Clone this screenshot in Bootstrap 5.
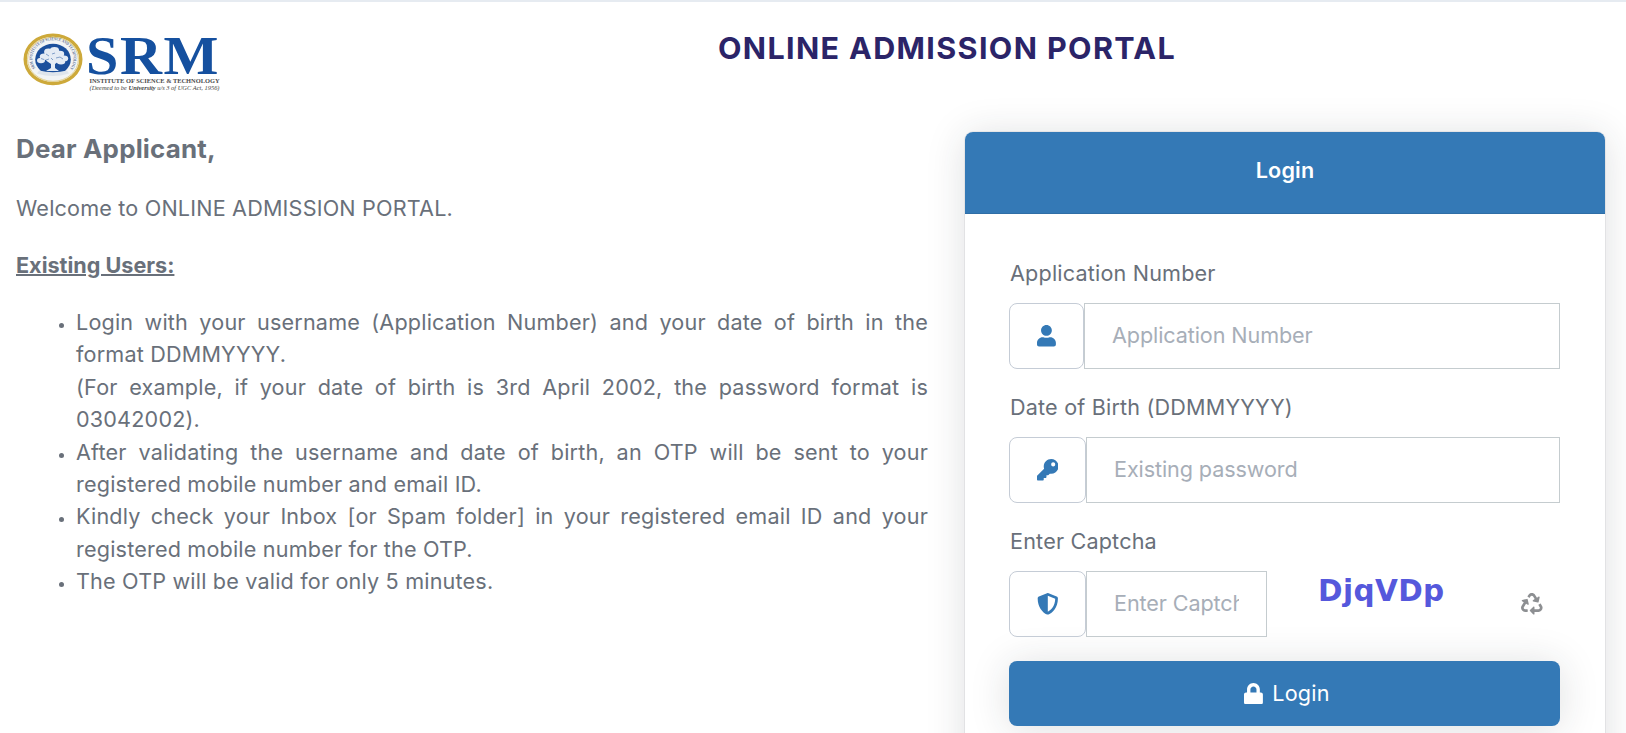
<!DOCTYPE html>
<html lang="en">
<head>
  <meta charset="UTF-8">
  <meta name="viewport" content="width=device-width, initial-scale=1.0">
  <title>Online Admission Portal</title>
  <link href="https://cdn.jsdelivr.net/npm/bootstrap@5.3.3/dist/css/bootstrap.min.css" rel="stylesheet">
  <style>
    body {
      font-family: Inter, "Liberation Sans", sans-serif;
      font-size: 21.6px;
      line-height: 32.4px;
      letter-spacing: 0.18px;
      color: #69707a;
      background-color: #fff;
      height: 100vh;
      overflow: hidden;
      border-top: 2px solid #e6ebf1;
    }

    .portal-head {
      height: 130px;
      padding: 29px 0 0 22px;
    }

    .portal-logo {
      width: 200px;
      height: 64px;
      flex: none;
      overflow: visible;
    }

    .portal-title {
      font-size: 30.5px;
      font-weight: 700;
      line-height: 34px;
      letter-spacing: 1.36px;
      color: #2b2468;
      margin-left: 496px;
    }

    .portal-main {
      padding-left: 16px;
      gap: 37px;
    }

    .intro {
      width: 912px;
      flex: none;
    }

    .intro h4 {
      font-size: 25.9px;
      font-weight: 700;
      line-height: 32px;
      letter-spacing: 0.2px;
      padding-top: 1px;
      margin-bottom: 27px;
    }

    .intro p {
      margin-bottom: 24.6px;
    }

    .intro u {
      font-weight: 700;
      letter-spacing: 0;
      text-decoration-thickness: 2px;
    }

    .steps {
      padding-left: 60px;
      text-align: justify;
    }

    .steps li::marker {
      font-size: 17px;
    }

    .login-card {
      width: 640px;
      height: 680px;
      flex: none;
      border: 0;
      border-radius: 8px;
      box-shadow: 0 0 0 1px rgba(33, 40, 50, .06), 0 3px 39px rgba(33, 40, 50, .15);
    }

    .login-card .card-header {
      height: 82px;
      padding: 22px 0 0;
      background-color: #3479b6;
      border-radius: 8px 8px 0 0;
      border-bottom: 1px solid #2f6ea6;
      font-weight: 600;
    }

    .login-card .card-body {
      padding: 42.5px 45px 0 44px;
    }

    .login-card label {
      display: block;
      height: 46.5px;
      padding-left: 1px;
    }

    .field {
      height: 66px;
      margin-bottom: 21.5px;
    }

    .field-icon {
      width: 77px;
      border: 1px solid #c5ccd6;
      border-radius: 8px;
      color: #3479b6;
      flex: none;
    }

    .field-icon.narrow {
      width: 75px;
    }

    .field .form-control {
      border: 1px solid #c5cccf;
      border-radius: 0;
      padding: 0 27px 2px;
      font-size: 21.6px;
      letter-spacing: -0.1px;
    }

    .field .form-control::placeholder {
      color: #a7aeb8;
    }

    .field .captcha-input {
      width: 181px;
      flex: none;
    }

    .captcha-text {
      font-family: "DejaVu Sans", sans-serif;
      font-size: 29.5px;
      font-weight: 700;
      letter-spacing: 0.4px;
      color: #5558dc;
      margin-left: 51px;
      padding-top: 4px;
    }

    .recycle {
      color: #8d8f92;
      margin-right: 17px;
    }

    .btn-login {
      height: 65px;
      margin-top: 24px;
      padding: 0 0 0 5px;
      background-color: #3479b6;
      border: 0;
      border-radius: 8px;
      font-size: 21.6px;
      letter-spacing: inherit;
      box-shadow: 0 3px 39px rgba(33, 40, 50, .15);
    }

    .btn-login svg {
      margin-right: 1px;
    }
  </style>
</head>
<body>

  <header class="portal-head d-flex align-items-start">
    <svg class="portal-logo" viewBox="22 31 200 64">
      <defs>
        <path id="ring" d="M35.5 68 A20.6 18.2 0 1 1 70.5 68"/>
      </defs>
      <!-- seal -->
      <ellipse cx="53" cy="59.3" rx="27.8" ry="24.2" fill="#f2f4f5" stroke="#cda93a" stroke-width="3.4"/>
      <ellipse cx="53" cy="59.3" rx="25.4" ry="22" fill="none" stroke="#e3cf8a" stroke-width="1"/>
      <text font-family="Liberation Serif, serif" font-size="4.4" font-weight="700" fill="#5c6f93" letter-spacing="0"><textPath href="#ring" textLength="82" lengthAdjust="spacingAndGlyphs">SRM INSTITUTE OF SCIENCE AND TECHNOLOGY</textPath></text>
      <ellipse cx="53" cy="59.4" rx="17.8" ry="15.6" fill="#1b4f9c"/>
      <path d="M39 70.5q14 3.500 28 0l2 3q-16 5-32 0z" fill="#dfe5ec"/>
      <!-- tree -->
      <g fill="#e4ebf4">
        <ellipse cx="41" cy="60.500" rx="4" ry="2.800"/>
        <ellipse cx="44" cy="56.500" rx="4.200" ry="3"/>
        <ellipse cx="48.500" cy="52" rx="4.400" ry="3.400"/>
        <ellipse cx="54.500" cy="50.500" rx="4.600" ry="3.400"/>
        <ellipse cx="60" cy="54" rx="4.200" ry="3.200"/>
        <ellipse cx="64" cy="58.500" rx="4.200" ry="3"/>
        <ellipse cx="61" cy="62" rx="4.200" ry="2.400"/>
        <ellipse cx="53" cy="57.500" rx="9" ry="4.600"/>
        <path d="M46 60.500l5 3.500v4l-5 3h13l-4-3v-4l5-3.500z"/>
      </g>
      <path d="M41 58.500l3 1M46 54l3 2M52 54l3-1M56 58l4-1M46 60l3-1M60 57l3 2M51 58l2 2" stroke="#1b4f9c" stroke-width=".7" fill="none" opacity=".7"/>
      <text x="86" y="73.600" font-family="Liberation Serif, serif" font-size="55" font-weight="700" fill="#15509f" letter-spacing="1.500" textLength="134" lengthAdjust="spacingAndGlyphs">SRM</text>
      <text x="89.500" y="83" font-family="Liberation Serif, serif" font-size="7" font-weight="700" fill="#4a4a4c" letter-spacing="0" textLength="130" lengthAdjust="spacingAndGlyphs">INSTITUTE OF SCIENCE &amp; TECHNOLOGY</text>
      <text x="89.500" y="90.200" font-family="Liberation Serif, serif" font-size="6.200" font-style="italic" fill="#3f3f42" letter-spacing="0" textLength="130" lengthAdjust="spacingAndGlyphs">(Deemed to be <tspan font-weight="700">University</tspan> u/s 3 of UGC Act, 1956)</text>
    </svg>
    <h1 class="portal-title mb-0">ONLINE ADMISSION PORTAL</h1>
  </header>

  <main class="portal-main d-flex align-items-start">

    <section class="intro">
      <h4>Dear Applicant,</h4>
      <p>Welcome to ONLINE ADMISSION PORTAL.</p>
      <p><u>Existing Users:</u></p>
      <ul class="steps mb-0">
        <li>Login with your username (Application Number) and your date of birth in the format DDMMYYYY.<br>
          (For example, if your date of birth is 3rd April 2002, the password format is 03042002).</li>
        <li>After validating the username and date of birth, an OTP will be sent to your registered mobile number and email ID.</li>
        <li>Kindly check your Inbox [or Spam folder] in your registered email ID and your registered mobile number for the OTP.</li>
        <li>The OTP will be valid for only 5 minutes.</li>
      </ul>
    </section>

    <section class="card login-card">
      <div class="card-header text-center text-white">Login</div>
      <form class="card-body">

        <label for="appNo">Application Number</label>
        <div class="field d-flex">
          <span class="field-icon narrow d-flex align-items-center justify-content-center">
            <svg width="18.9" height="21.6" viewBox="0 0 448 512" fill="currentColor"><path d="M224 256c70.7 0 128-57.3 128-128S294.7 0 224 0 96 57.3 96 128s57.3 128 128 128zm89.6 32h-16.7c-22.200 10.200-46.900 16-72.900 16s-50.600-5.800-72.900-16h-16.700C60.200 288 0 348.200 0 422.400V464c0 26.500 21.500 48 48 48h352c26.500 0 48-21.500 48-48v-41.600c0-74.200-60.200-134.400-134.400-134.400z"/></svg>
          </span>
          <input type="text" class="form-control" id="appNo" placeholder="Application Number">
        </div>

        <label for="dob">Date of Birth (DDMMYYYY)</label>
        <div class="field d-flex">
          <span class="field-icon d-flex align-items-center justify-content-center">
            <svg width="21.6" height="21.6" viewBox="0 0 512 512" fill="currentColor"><path d="M512 176C512 273.200 433.200 352 336 352c-11.220 0-22.190-1.060-32.830-3.070l-24.010 27.010A24 24 0 0 1 261.220 384H224v40c0 13.250-10.750 24-24 24h-40v40c0 13.250-10.750 24-24 24H24c-13.250 0-24-10.750-24-24v-78.060c0-6.360 2.530-12.470 7.030-16.970l161.800-161.800C163.100 213.810 160 195.270 160 176 160 78.800 238.800 0 336 0 433.490 0 512 78.510 512 176zM336 128c0 26.510 21.490 48 48 48s48-21.490 48-48-21.490-48-48-48-48 21.490-48 48z"/></svg>
          </span>
          <input type="password" class="form-control" id="dob" placeholder="Existing password">
        </div>

        <label for="captcha">Enter Captcha</label>
        <div class="field d-flex">
          <span class="field-icon d-flex align-items-center justify-content-center">
            <svg width="21.6" height="21.6" viewBox="0 0 512 512" fill="currentColor"><path d="M466.500 83.700l-192-80a48.150 48.150 0 0 0-36.900 0l-192 80C27.700 91.100 16 108.600 16 128c0 198.500 114.500 335.700 221.500 380.300 11.800 4.900 25.100 4.900 36.900 0C360.100 472.600 496 349.300 496 128c0-19.400-11.700-36.900-29.500-44.300zM256.100 446.300l-.1-381 175.900 73.300c-3.300 151.400-82.100 261.100-175.800 307.700z"/></svg>
          </span>
          <input type="text" class="form-control captcha-input" id="captcha" placeholder="Enter Captcha">
          <span class="captcha-text">DjqVDp</span>
          <span class="recycle ms-auto d-flex align-items-center">
            <svg width="21.6" height="21.6" viewBox="0 0 512 512" fill="currentColor"><path d="M184.561 261.903c3.232 13.997-12.123 24.635-24.068 17.168l-40.736-25.455-50.867 81.402C55.606 356.273 70.960 384 96.012 384H148c6.627 0 12 5.373 12 12v40c0 6.627-5.373 12-12 12H96.115c-75.334 0-121.302-83.048-81.408-146.880l50.822-81.388-40.725-25.448c-12.081-7.547-8.966-25.961 4.879-29.158l110.237-25.450c8.611-1.988 17.201 3.381 19.189 11.990l25.452 110.237zm98.561-182.915l41.289 66.076-40.740 25.457c-12.051 7.528-9 25.953 4.879 29.158l110.237 25.450c8.672 1.999 17.215-3.438 19.189-11.990l25.450-110.237c3.197-13.844-11.990-24.719-24.068-17.168l-40.687 25.424-41.263-66.082c-37.521-60.033-125.209-60.171-162.816 0l-17.963 28.766c-3.510 5.620-1.800 13.021 3.820 16.533l33.919 21.195c5.620 3.512 13.024 1.803 16.536-3.817l17.961-28.743c12.712-20.341 41.973-19.676 54.257-.022zM497.288 301.120l-27.515-44.065c-3.511-5.623-10.916-7.334-16.538-3.821l-33.861 21.159c-5.620 3.512-7.330 10.915-3.818 16.536l27.564 44.112c13.257 21.211-2.057 48.960-27.136 48.960H320V336.020c0-14.213-17.242-21.383-27.313-11.313l-80 79.981c-6.249 6.248-6.249 16.379 0 22.627l80 79.989C302.689 517.308 320 510.300 320 495.989V448h95.880c75.274 0 121.335-82.997 81.408-146.880z"/></svg>
          </span>
        </div>

        <button type="button" class="btn btn-login text-white w-100 d-flex align-items-center justify-content-center gap-2">
          <svg width="18.9" height="21.6" viewBox="0 0 448 512" fill="currentColor"><path d="M400 224h-24v-72C376 68.200 307.800 0 224 0S72 68.200 72 152v72H48c-26.500 0-48 21.500-48 48v192c0 26.500 21.500 48 48 48h352c26.500 0 48-21.500 48-48V272c0-26.500-21.500-48-48-48zm-104 0H152v-72c0-39.700 32.300-72 72-72s72 32.300 72 72v72z"/></svg>
          <span>Login</span>
        </button>

      </form>
    </section>

  </main>

  <script src="https://cdn.jsdelivr.net/npm/bootstrap@5.3.3/dist/js/bootstrap.bundle.min.js"></script>
</body>
</html>
